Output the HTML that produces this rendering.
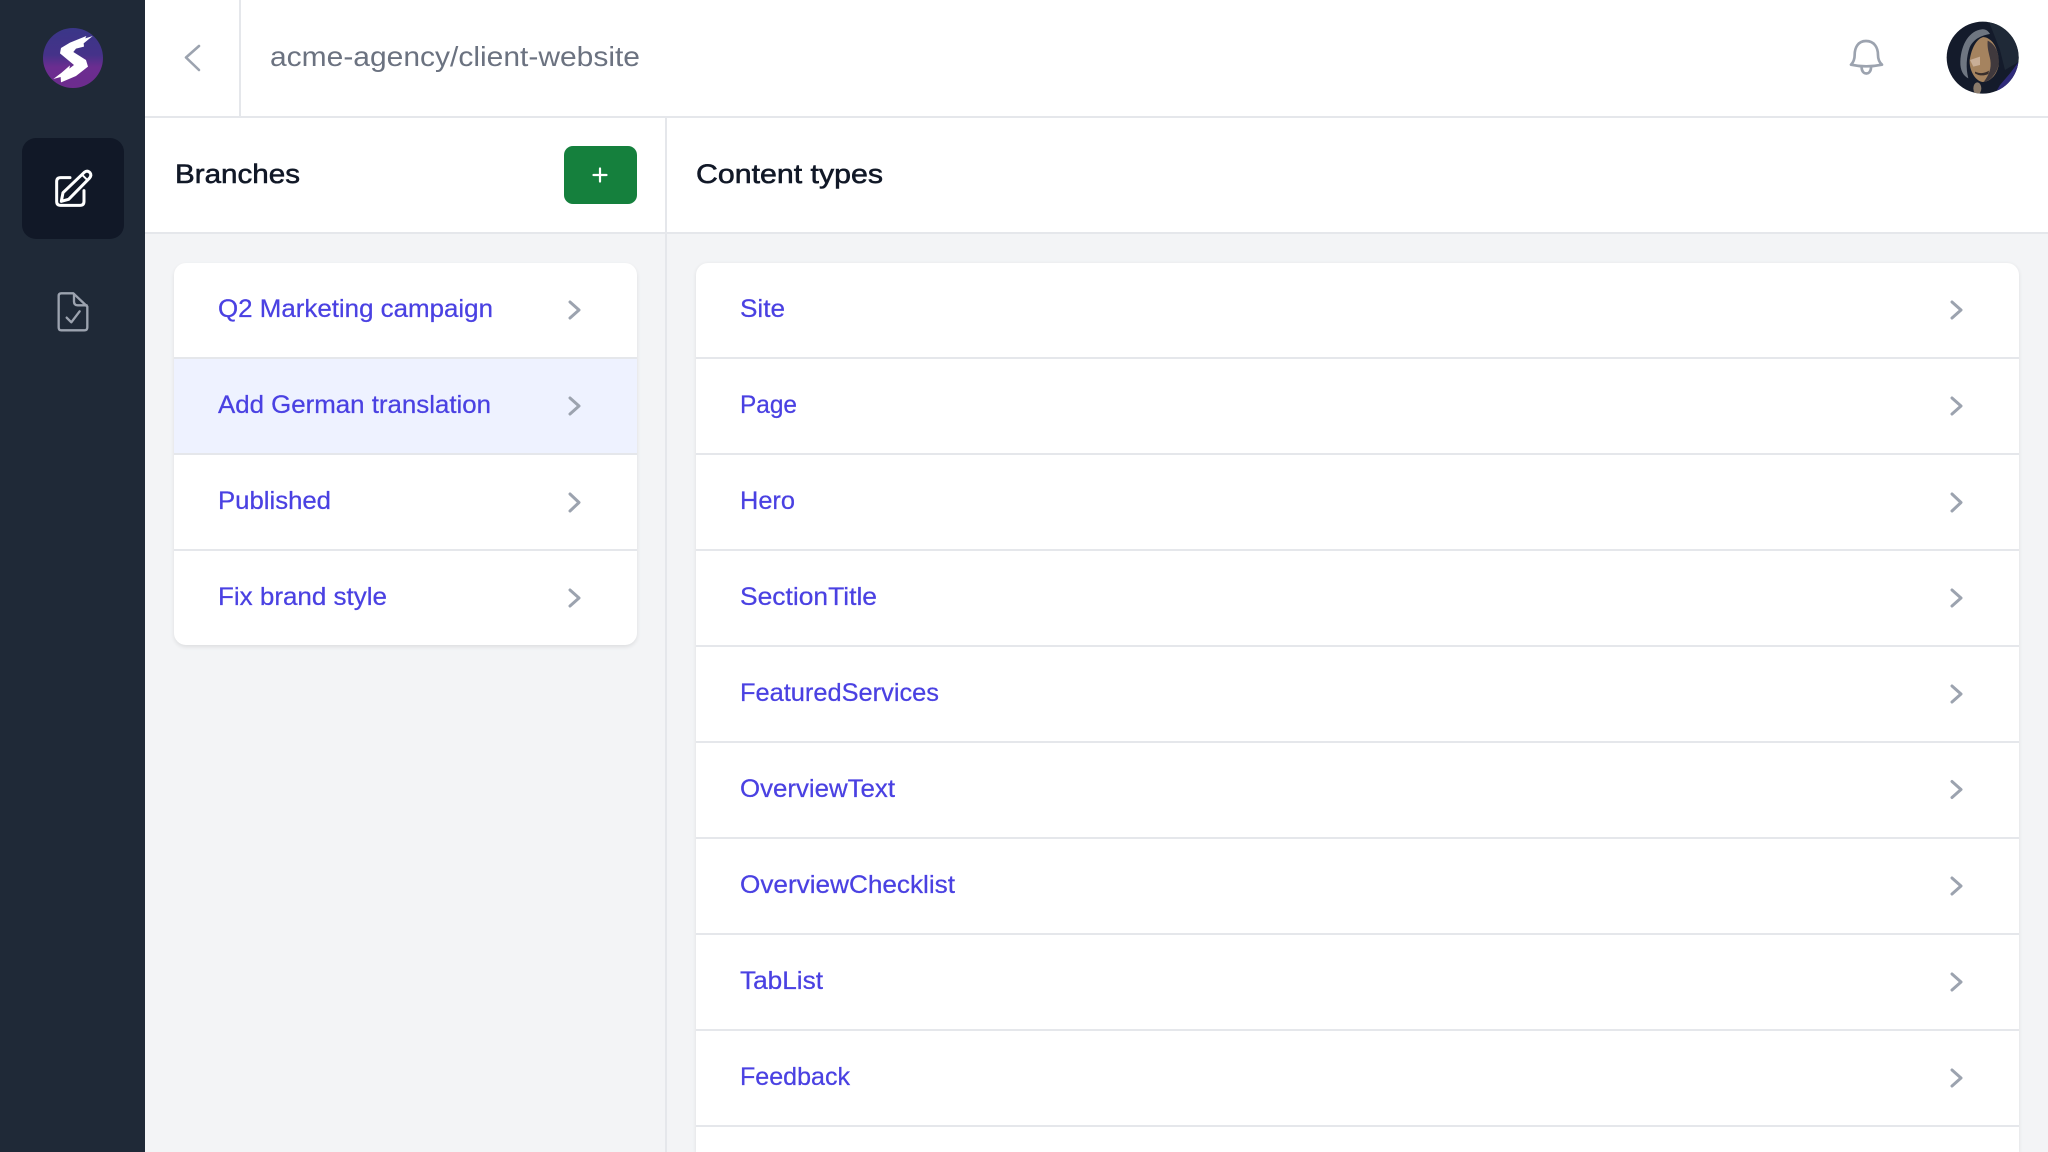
<!DOCTYPE html>
<html lang="en"><head><meta charset="utf-8"><title>Branches</title>
<style>
html,body{margin:0;padding:0;width:2048px;height:1152px;overflow:hidden;background:#f3f4f6}
div{position:absolute;box-sizing:border-box}
svg{position:absolute;left:0;top:0}
text{font-family:"Liberation Sans",sans-serif}
.l{font-size:25px;fill:#4a41e2;stroke:#4a41e2;stroke-width:.25px}
.h{font-size:26.5px;fill:#111827;stroke:#111827;stroke-width:.55px}
.c{fill:none;stroke:#9ca3af;stroke-width:3;stroke-linecap:round;stroke-linejoin:round}
#page{left:0;top:0;width:2048px;height:1152px;overflow:hidden;background:#f3f4f6}
</style></head><body>
<div id="page">
<div style="left:0;top:0;width:145px;height:1152px;background:#1f2937"></div>
<div style="left:145px;top:0;width:1903px;height:118px;background:#fff;border-bottom:2px solid #e5e7eb"></div>
<div style="left:239px;top:0;width:2px;height:116px;background:#e5e7eb"></div>
<div style="left:145px;top:118px;width:1903px;height:116px;background:#fff;border-bottom:2px solid #e5e7eb"></div>
<div style="left:665px;top:118px;width:2px;height:1034px;background:#e5e7eb"></div>
<div style="left:22px;top:138px;width:102px;height:101px;background:#111827;border-radius:14px"></div>
<div style="left:564px;top:146px;width:73px;height:58px;background:#15803d;border-radius:9px"></div>
<div style="left:174px;top:263px;width:463px;height:382px;background:#fff;border-radius:12px;box-shadow:0 2px 4px rgba(0,0,0,.09);overflow:hidden">
  <div style="left:0;top:94px;width:463px;height:2px;background:#e5e7eb"></div>
  <div style="left:0;top:96px;width:463px;height:95px;background:#eef2ff"></div>
  <div style="left:0;top:190px;width:463px;height:2px;background:#e5e7eb"></div>
  <div style="left:0;top:286px;width:463px;height:2px;background:#e5e7eb"></div>
</div>
<div style="left:696px;top:263px;width:1323px;height:889px;background:#fff;border-radius:12px 12px 0 0;box-shadow:0 1px 4px rgba(0,0,0,.09)">
  <div style="left:0;top:94px;width:1323px;height:2px;background:#e5e7eb"></div>
  <div style="left:0;top:190px;width:1323px;height:2px;background:#e5e7eb"></div>
  <div style="left:0;top:286px;width:1323px;height:2px;background:#e5e7eb"></div>
  <div style="left:0;top:382px;width:1323px;height:2px;background:#e5e7eb"></div>
  <div style="left:0;top:478px;width:1323px;height:2px;background:#e5e7eb"></div>
  <div style="left:0;top:574px;width:1323px;height:2px;background:#e5e7eb"></div>
  <div style="left:0;top:670px;width:1323px;height:2px;background:#e5e7eb"></div>
  <div style="left:0;top:766px;width:1323px;height:2px;background:#e5e7eb"></div>
  <div style="left:0;top:862px;width:1323px;height:2px;background:#e5e7eb"></div>
</div>
<svg width="2048" height="1152" viewBox="0 0 2048 1152" xmlns="http://www.w3.org/2000/svg">
<defs>
<linearGradient id="g" x1="0" y1="0" x2="0" y2="1"><stop offset="0" stop-color="#3a3688"/><stop offset=".45" stop-color="#453289"/><stop offset=".65" stop-color="#6b2d90"/><stop offset="1" stop-color="#6d2c8e"/></linearGradient>
<clipPath id="av"><circle cx="173" cy="143" r="108"/></clipPath>
</defs>
<!-- logo -->
<circle cx="73" cy="58" r="30" fill="url(#g)"/>
<path transform="translate(20,10) scale(.3333)" fill="#fff" d="M218 78L196 85L199 78L150 98L123 114L120 130L162 165L148 176L150 166L125 188L100 207L122 201L123 217L168 198L204 170L198 150L160 126L168 116L192 110L191 100Z"/>
<!-- edit -->
<g transform="translate(20,130) scale(.3333)" fill="none" stroke="#fff" stroke-width="9" stroke-linecap="round" stroke-linejoin="round">
<path d="M150 143H122Q110 143 110 155V214Q110 226 122 226H180Q192 226 192 214V182"/>
<path d="M124 214L129 188L193 127Q202 120 210 128Q216 136 208 145L146 208Z"/>
<path d="M186 134L203 151" stroke-width="6"/>
</g>
<!-- doc -->
<g transform="translate(20,130) scale(.3333)" fill="none" stroke="#9ca3af" stroke-width="7" stroke-linecap="round" stroke-linejoin="round">
<path d="M124 490H160L202 530V592Q202 601 193 601H124Q116 601 116 592V498Q116 490 124 490Z"/>
<path d="M162 492V515Q162 526 173 526H200"/>
<path d="M140 563L154 577L179 544"/>
</g>
<!-- back -->
<path d="M199 46L186 57.5L199 70" fill="none" stroke="#9ca3af" stroke-width="2.6" stroke-linecap="round" stroke-linejoin="round"/>
<!-- plus -->
<path d="M600 168.500V181.500M593.500 175H606.500" stroke="#fff" stroke-width="2.2" stroke-linecap="round"/>
<!-- bell -->
<g transform="translate(1780,0) scale(.3333)" fill="none" stroke="#9ca3af" stroke-width="8" stroke-linecap="round" stroke-linejoin="round">
<path d="M258 123C234 123 224 143 224 165C224 178 220 187 213 194Q258 204 306 194C298 187 294 178 294 165C294 143 283 123 258 123Z"/>
<path d="M245 204C246 226 272 226 273 204"/>
</g>
<!-- avatar -->
<g transform="translate(1925,10) scale(.3333)"><g clip-path="url(#av)">
<rect x="60" y="30" width="230" height="230" fill="#141b2b"/>
<path d="M190 30L290 30L290 150L240 180L225 120Z" fill="#1f2937"/>
<path d="M285 150L285 260L205 260L225 225L255 190Z" fill="#2f2b7a"/>
<path d="M170 58C135 62 108 100 106 155C105 180 115 198 130 205C122 175 124 140 134 112C144 92 160 78 195 72C190 62 180 56 170 58Z" fill="#6f7681"/>
<path d="M172 82C155 88 140 112 134 150C132 180 150 212 172 216C195 216 215 195 220 170C224 140 215 105 196 90C188 84 180 80 172 82Z" fill="#a5835f"/>
<path d="M135 150L165 140L165 165L145 170Z" fill="#c9ae96"/>
<path d="M188 92C215 105 228 140 218 175C208 200 192 214 176 216C192 195 200 175 196 150C192 130 186 115 188 92Z" fill="#40393d"/>
<path d="M150 185C165 192 180 190 192 182L190 192C178 198 162 198 150 190Z" fill="#3a2f2c"/>
<ellipse cx="157" cy="235" rx="12" ry="18" fill="#8a7a6a"/>
</g></g>
<!-- headings -->
<text class="h" x="175" y="183" textLength="125" lengthAdjust="spacingAndGlyphs">Branches</text>
<text class="h" x="696" y="183" textLength="187" lengthAdjust="spacingAndGlyphs">Content types</text>
<text x="270" y="66" font-size="28" fill="#6b7280" textLength="370" lengthAdjust="spacingAndGlyphs">acme-agency/client-website</text>
<!-- left list -->
<text class="l" x="218" y="317" textLength="275" lengthAdjust="spacingAndGlyphs">Q2 Marketing campaign</text>
<text class="l" x="218" y="413" textLength="273" lengthAdjust="spacingAndGlyphs">Add German translation</text>
<text class="l" x="218" y="509" textLength="113" lengthAdjust="spacingAndGlyphs">Published</text>
<text class="l" x="218" y="605" textLength="169" lengthAdjust="spacingAndGlyphs">Fix brand style</text>
<path class="c" d="M570 302L579 310L570 318M570 398L579 406L570 414M570 494L579 502.500L570 511M570 590L579 598L570 606"/>
<!-- right list -->
<text class="l" x="740" y="317" textLength="45" lengthAdjust="spacingAndGlyphs">Site</text>
<text class="l" x="740" y="413" textLength="57" lengthAdjust="spacingAndGlyphs">Page</text>
<text class="l" x="740" y="509" textLength="55" lengthAdjust="spacingAndGlyphs">Hero</text>
<text class="l" x="740" y="605" textLength="137" lengthAdjust="spacingAndGlyphs">SectionTitle</text>
<text class="l" x="740" y="701" textLength="199" lengthAdjust="spacingAndGlyphs">FeaturedServices</text>
<text class="l" x="740" y="797" textLength="155" lengthAdjust="spacingAndGlyphs">OverviewText</text>
<text class="l" x="740" y="893" textLength="215" lengthAdjust="spacingAndGlyphs">OverviewChecklist</text>
<text class="l" x="740" y="989" textLength="83" lengthAdjust="spacingAndGlyphs">TabList</text>
<text class="l" x="740" y="1085" textLength="110" lengthAdjust="spacingAndGlyphs">Feedback</text>
<path class="c" d="M1952 302L1961 310L1952 318M1952 398L1961 406L1952 414M1952 494L1961 502.500L1952 511M1952 590L1961 598L1952 606M1952 686L1961 694L1952 702M1952 781.500L1961 789.500L1952 797.500M1952 878L1961 886L1952 894M1952 974L1961 982L1952 990M1952 1070L1961 1078L1952 1086"/>
</svg>
</div>
</body></html>
